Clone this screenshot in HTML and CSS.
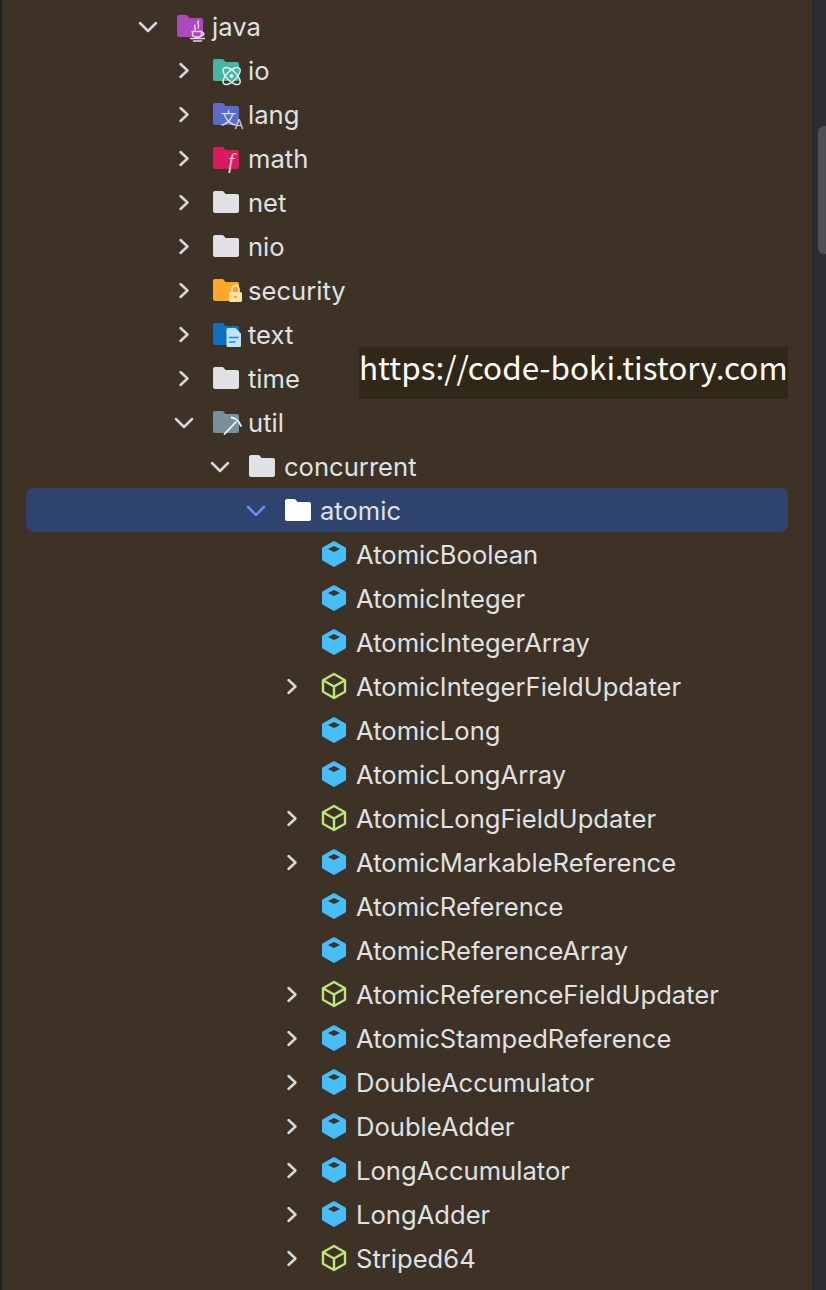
FILE: index.html
```html
<!DOCTYPE html>
<html lang="en">
<head>
<meta charset="utf-8">
<title>Project tree</title>
<link rel="stylesheet" href="styles.css">
</head>
<body>
<svg class="defs" width="0" height="0" aria-hidden="true">
  <symbol id="right" viewBox="0 0 32 32"><path class="chev" d="M12.500 10l7 6.500-7 6.500"/></symbol>
  <symbol id="down" viewBox="0 0 32 32"><path class="chev" d="M8 13l8 8 8-8"/></symbol>
  <symbol id="folder" viewBox="0 0 32 32"><path d="M5 5h7.200c.6 0 1.100.2 1.500.7L15.600 8H27a2 2 0 0 1 2 2v15a2 2 0 0 1-2 2H5a2 2 0 0 1-2-2V7a2 2 0 0 1 2-2z"/></symbol>
  <symbol id="cls" viewBox="0 0 32 32"><path class="hex" d="M16 4l11 6.300v11.400L16 28 5 21.700V10.300z"/><path class="hole" d="M16 8l6 3-6 3-6-3z"/></symbol>
  <symbol id="abs" viewBox="0 0 32 32"><path class="hexo" d="M16 4l11 6.300v11.400L16 28 5 21.700V10.300zM5.500 10.500L16 16.500l10.500-6M16 16.500V28"/></symbol>
</svg>
<div class="strip"></div>
<main class="tree">
  <div class="row d0"><svg class="ic"><use href="#down"/></svg>
    <svg class="ic folder-java" viewBox="0 0 32 32"><use href="#folder"/><g class="ov-java"><path d="M24.500 11c-2.500 2.500 2 4-.5 7M21 15c-1.500 2 1 3 0 5"/><path d="M18 21.500h10M18.500 21.500v2.500c0 2 1.500 3 3.500 3h2.500c2 0 3-1 3-3v-2.500M28 22.500c2.500-.5 2.500 3-.5 3.500M16.500 28.500h14M19.500 31h8"/></g></svg>
    <span>java</span></div>
  <div class="row d1"><svg class="ic"><use href="#right"/></svg>
    <svg class="ic folder-io" viewBox="0 0 32 32"><use href="#folder"/><g class="ov-io"><ellipse cx="21.600" cy="22" rx="11" ry="5" transform="rotate(45 21.600 22)"/><ellipse cx="21.600" cy="22" rx="11" ry="5" transform="rotate(-45 21.600 22)"/><circle cx="21.600" cy="22" r="2"/></g></svg>
    <span>io</span></div>
  <div class="row d1"><svg class="ic"><use href="#right"/></svg>
    <svg class="ic folder-lang" viewBox="0 0 32 32"><use href="#folder"/><text class="ov-zi" x="10.500" y="26">文<tspan class="ov-a" dx="-2" dy="5">A</tspan></text></svg>
    <span>lang</span></div>
  <div class="row d1"><svg class="ic"><use href="#right"/></svg>
    <svg class="ic folder-math" viewBox="0 0 32 32"><use href="#folder"/><text class="ov-f" x="18" y="26">f</text></svg>
    <span>math</span></div>
  <div class="row d1"><svg class="ic"><use href="#right"/></svg><svg class="ic folder-plain"><use href="#folder"/></svg><span>net</span></div>
  <div class="row d1"><svg class="ic"><use href="#right"/></svg><svg class="ic folder-plain"><use href="#folder"/></svg><span>nio</span></div>
  <div class="row d1"><svg class="ic"><use href="#right"/></svg>
    <svg class="ic folder-sec" viewBox="0 0 32 32"><use href="#folder"/><rect class="lock-b" x="19" y="18" width="13" height="10" rx="1.500"/><path class="lock-s" d="M22 18v-3a3.500 3.500 0 0 1 7 0v3"/><circle class="lock-d" cx="25.500" cy="23" r="1.300"/></svg>
    <span>security</span></div>
  <div class="row d1"><svg class="ic"><use href="#right"/></svg>
    <svg class="ic folder-text" viewBox="0 0 32 32"><use href="#folder"/><path class="doc" d="M18 10h7.500l5.500 5.500V27.500a1.500 1.500 0 0 1-1.500 1.500H18a1.500 1.500 0 0 1-1.500-1.500v-16A1.500 1.500 0 0 1 18 10z"/><path class="doc-l" d="M19 19.500h9.500M19 24h6.500"/></svg>
    <span>text</span></div>
  <div class="row d1"><svg class="ic"><use href="#right"/></svg><svg class="ic folder-plain"><use href="#folder"/></svg><span>time</span></div>
  <div class="row d1"><svg class="ic"><use href="#down"/></svg>
    <svg class="ic folder-util" viewBox="0 0 32 32"><use href="#folder"/><path class="pick" d="M14.500 28L26 16M21.500 11.500c4 .5 8 4 9.500 8.500"/></svg>
    <span>util</span></div>
  <div class="row d2"><svg class="ic"><use href="#down"/></svg><svg class="ic folder-plain"><use href="#folder"/></svg><span>concurrent</span></div>
  <div class="row d3 selected"><svg class="ic chev-sel"><use href="#down"/></svg><svg class="ic folder-white"><use href="#folder"/></svg><span>atomic</span></div>
  <div class="row d4"><i class="ic"></i><svg class="ic"><use href="#cls"/></svg><span>AtomicBoolean</span></div>
  <div class="row d4"><i class="ic"></i><svg class="ic"><use href="#cls"/></svg><span>AtomicInteger</span></div>
  <div class="row d4"><i class="ic"></i><svg class="ic"><use href="#cls"/></svg><span>AtomicIntegerArray</span></div>
  <div class="row d4"><svg class="ic"><use href="#right"/></svg><svg class="ic"><use href="#abs"/></svg><span>AtomicIntegerFieldUpdater</span></div>
  <div class="row d4"><i class="ic"></i><svg class="ic"><use href="#cls"/></svg><span>AtomicLong</span></div>
  <div class="row d4"><i class="ic"></i><svg class="ic"><use href="#cls"/></svg><span>AtomicLongArray</span></div>
  <div class="row d4"><svg class="ic"><use href="#right"/></svg><svg class="ic"><use href="#abs"/></svg><span>AtomicLongFieldUpdater</span></div>
  <div class="row d4"><svg class="ic"><use href="#right"/></svg><svg class="ic"><use href="#cls"/></svg><span>AtomicMarkableReference</span></div>
  <div class="row d4"><i class="ic"></i><svg class="ic"><use href="#cls"/></svg><span>AtomicReference</span></div>
  <div class="row d4"><i class="ic"></i><svg class="ic"><use href="#cls"/></svg><span>AtomicReferenceArray</span></div>
  <div class="row d4"><svg class="ic"><use href="#right"/></svg><svg class="ic"><use href="#abs"/></svg><span>AtomicReferenceFieldUpdater</span></div>
  <div class="row d4"><svg class="ic"><use href="#right"/></svg><svg class="ic"><use href="#cls"/></svg><span>AtomicStampedReference</span></div>
  <div class="row d4"><svg class="ic"><use href="#right"/></svg><svg class="ic"><use href="#cls"/></svg><span>DoubleAccumulator</span></div>
  <div class="row d4"><svg class="ic"><use href="#right"/></svg><svg class="ic"><use href="#cls"/></svg><span>DoubleAdder</span></div>
  <div class="row d4"><svg class="ic"><use href="#right"/></svg><svg class="ic"><use href="#cls"/></svg><span>LongAccumulator</span></div>
  <div class="row d4"><svg class="ic"><use href="#right"/></svg><svg class="ic"><use href="#cls"/></svg><span>LongAdder</span></div>
  <div class="row d4"><svg class="ic"><use href="#right"/></svg><svg class="ic"><use href="#abs"/></svg><span>Striped64</span></div>
  <div class="watermark">https://code-boki.tistory.com</div>
</main>
<aside class="scrollbar"><div class="thumb"></div></aside>
</body>
</html>
```
FILE: styles.css
```css
html, body { margin: 0; height: 100%; }
body {
  display: flex;
  height: 1290px;
  overflow: hidden;
  background: #3e3226;
  font-family: Inter, "Noto Sans", sans-serif;
  font-size: 25.6px;
  color: #dfe1e5;
}
.defs { position: absolute; }
.strip { width: 2px; background: #1e1f22; flex: none; }
.tree {
  position: relative;
  flex: none;
  width: 762px;
  margin-left: 24px;
  margin-right: 24px;
  padding-top: 4px;
}
.row {
  display: flex;
  align-items: center;
  height: 44px;
  border-radius: 8px;
  color: #d6d7da;
}
.row span { margin-left: 6px; white-space: nowrap; color: #dfe1e5; }
.d0 { padding-left: 106px; }
.d1 { padding-left: 142px; }
.d2 { padding-left: 178px; }
.d3 { padding-left: 214px; }
.d4 { padding-left: 250px; }
.selected { background: #2e436e; }
.ic { display: block; width: 32px; height: 32px; flex: none; }
.ic + .ic { margin-left: 10px; }
.chev { fill: none; stroke: currentColor; stroke-width: 2.500; stroke-linecap: round; stroke-linejoin: round; }
.chev-sel { color: #5e93f5; }
.hex { fill: #47bdfb; stroke: #47bdfb; stroke-width: 2; stroke-linejoin: round; }
.hole { fill: #3e3226; }
.hexo { fill: none; stroke: #bde57a; stroke-width: 2.400; stroke-linejoin: round; }
.folder-plain { fill: #dfe1e5; }
.folder-white { fill: #ffffff; }
.folder-java { fill: #ae48bd; overflow: visible; }
.folder-io { fill: #45b5a5; overflow: visible; }
.folder-lang { fill: #5c6bc8; overflow: visible; }
.folder-math { fill: #d81b60; overflow: visible; }
.folder-sec { fill: #ffa726; overflow: visible; }
.folder-text { fill: #0d72c5; overflow: visible; }
.folder-util { fill: #76909c; overflow: visible; }
.ov-java path { fill: none; stroke: #f2cdf2; stroke-width: 1.500; stroke-linecap: round; }
.ov-io ellipse { fill: none; stroke: #d7f1ec; stroke-width: 1.500; }
.ov-io circle { fill: #d7f1ec; }
.ov-zi { font-family: "Noto Sans CJK KR", sans-serif; font-size: 16px; fill: #d5daf7; }
.ov-a { font-family: Inter, sans-serif; font-size: 13px; fill: #d5daf7; }
.ov-f { font-family: "Liberation Serif", serif; font-style: italic; font-size: 22px; fill: #f9c4d8; }
.lock-b { fill: #fbe4a6; }
.lock-s { fill: none; stroke: #fbe4a6; stroke-width: 1.800; }
.lock-d { fill: #f19a2c; }
.doc { fill: #bfe3fb; }
.doc-l { fill: none; stroke: #1f87d6; stroke-width: 1.500; }
.pick { fill: none; stroke: #f4f6f7; stroke-width: 1.800; stroke-linecap: round; }
.watermark {
  position: absolute;
  left: 333px;
  top: 347px;
  width: 429px;
  height: 52px;
  background: #312719;
  color: #ffffff;
  font-family: "Noto Sans CJK KR", sans-serif;
  font-size: 31.500px;
  line-height: 38px;
  white-space: nowrap;
}
.scrollbar { flex: none; width: 14px; background: #2b2d30; }
.thumb {
  width: 8px;
  height: 128px;
  margin: 126px 0 0 6px;
  background: #4d4f52;
  border-radius: 6px 0 0 6px;
}
```
